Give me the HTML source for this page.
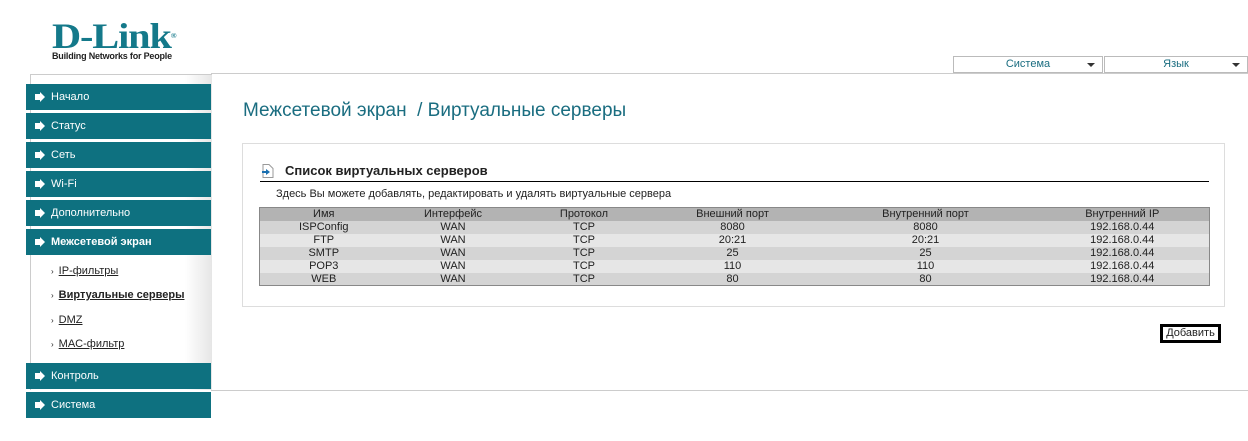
<!DOCTYPE html>
<html><head><meta charset="utf-8"><style>
*{margin:0;padding:0;box-sizing:border-box}
body{width:1248px;height:441px;background:#fff;font-family:"Liberation Sans","DejaVu Sans",sans-serif;position:relative;overflow:hidden;color:#222}
.abs{position:absolute}
.logo{left:52px;top:19px;font-family:"Liberation Serif",serif;font-weight:bold;font-size:36px;color:#14798a;letter-spacing:-1px;line-height:34px;transform:scaleX(1.12);transform-origin:left top}
.tag{left:52px;top:51px;font-size:9px;font-weight:bold;color:#222;letter-spacing:-0.2px}
.side{left:30px;top:74px;width:182px;height:316px;border:1px solid #ccc;border-right:none;border-bottom:none;background:linear-gradient(to right,#fff 85%,#e6e6e6)}
.mi{position:absolute;left:26px;width:185px;height:26px;background:#0e7180;color:#fff;font-size:11px;line-height:26px;padding-left:25px}
.mi:before{content:"";position:absolute;left:9px;top:10px;width:5px;height:6px;background:#fff}
.mi:after{content:"";position:absolute;left:14px;top:8px;border-left:5px solid #fff;border-top:5px solid transparent;border-bottom:5px solid transparent}
.sub{position:absolute;left:51px;font-size:11px;color:#222}
.sub span{font-size:8px;margin-right:5px}
.hline{height:1px;background:#ccc}
.dd{top:56px;height:17px;border:1px solid #bbb;font-size:11px;color:#1a6d80;text-align:center;line-height:15px}
.dd:after{content:"";position:absolute;right:7px;top:6px;border-top:4px solid #333;border-left:4px solid transparent;border-right:4px solid transparent}
.title{left:243px;top:100px;font-size:19px;color:#1a6d80}
.box{left:242px;top:143px;width:983px;height:164px;border:1px solid #ddd}
table{position:absolute;left:259px;top:207px;width:950px;border-collapse:collapse;border:1px solid #888;font-size:11px;text-align:center;table-layout:fixed}
td{height:13px;line-height:12px;padding:0}
tr.h{background:#b3b3b3}
tr:nth-child(even){background:#d4d4d4}
tr:nth-child(odd):not(.h){background:#e6e6e6}
.btn{left:1160px;top:324px;width:61px;height:19px;border:3px solid #000;font-size:11px;line-height:13px;text-align:center;background:#fff}
</style></head><body>
<div class="abs logo">D-Link<sup style="font-size:7px;vertical-align:top">®</sup></div>
<div class="abs tag">Building Networks for People</div>
<div class="abs hline" style="left:211px;top:73px;width:1037px"></div>
<div class="abs dd" style="left:953px;width:150px">Система</div>
<div class="abs dd" style="left:1104px;width:144px">Язык</div>
<div class="abs side"></div>
<div class="mi" style="top:84px">Начало</div>
<div class="mi" style="top:113px">Статус</div>
<div class="mi" style="top:142px">Сеть</div>
<div class="mi" style="top:171px">Wi-Fi</div>
<div class="mi" style="top:200px">Дополнительно</div>
<div class="mi" style="top:229px"><b>Межсетевой экран</b></div>
<div class="sub" style="top:265px"><span>›</span><u>IP-фильтры</u></div>
<div class="sub" style="top:289px"><span>›</span><u><b>Виртуальные серверы</b></u></div>
<div class="sub" style="top:314px"><span>›</span><u>DMZ</u></div>
<div class="sub" style="top:338px"><span>›</span><u>MAC-фильтр</u></div>
<div class="mi" style="top:363px">Контроль</div>
<div class="mi" style="top:392px">Система</div>
<div class="abs hline" style="left:211px;top:390px;width:1037px"></div>
<div class="abs title">Межсетевой экран &nbsp;/ Виртуальные серверы</div>
<div class="abs box"></div>
<svg class="abs" style="left:261px;top:164px" width="13" height="14"><path d="M2 .5h6l4 4v9H2z" fill="#fff" stroke="#999"/><path d="M1 7h4V5l4 3-4 3V9H1z" fill="#1a6fb0"/></svg>
<div class="abs" style="left:285px;top:163px;font-size:13px;font-weight:bold">Список виртуальных серверов</div>
<div class="abs" style="left:260px;top:181px;width:949px;height:1px;background:#000"></div>
<div class="abs" style="left:276px;top:188px;font-size:11px">Здесь Вы можете добавлять, редактировать и удалять виртуальные сервера</div>
<table>
<colgroup><col style="width:128px"><col style="width:131px"><col style="width:131px"><col style="width:166px"><col style="width:220px"><col style="width:174px"></colgroup>
<tr class="h"><td>Имя</td><td>Интерфейс</td><td>Протокол</td><td>Внешний порт</td><td>Внутренний порт</td><td>Внутренний IP</td></tr>
<tr><td>ISPConfig</td><td>WAN</td><td>TCP</td><td>8080</td><td>8080</td><td>192.168.0.44</td></tr>
<tr><td>FTP</td><td>WAN</td><td>TCP</td><td>20:21</td><td>20:21</td><td>192.168.0.44</td></tr>
<tr><td>SMTP</td><td>WAN</td><td>TCP</td><td>25</td><td>25</td><td>192.168.0.44</td></tr>
<tr><td>POP3</td><td>WAN</td><td>TCP</td><td>110</td><td>110</td><td>192.168.0.44</td></tr>
<tr><td>WEB</td><td>WAN</td><td>TCP</td><td>80</td><td>80</td><td>192.168.0.44</td></tr>
</table>
<div class="abs btn">Добавить</div>
</body></html>
